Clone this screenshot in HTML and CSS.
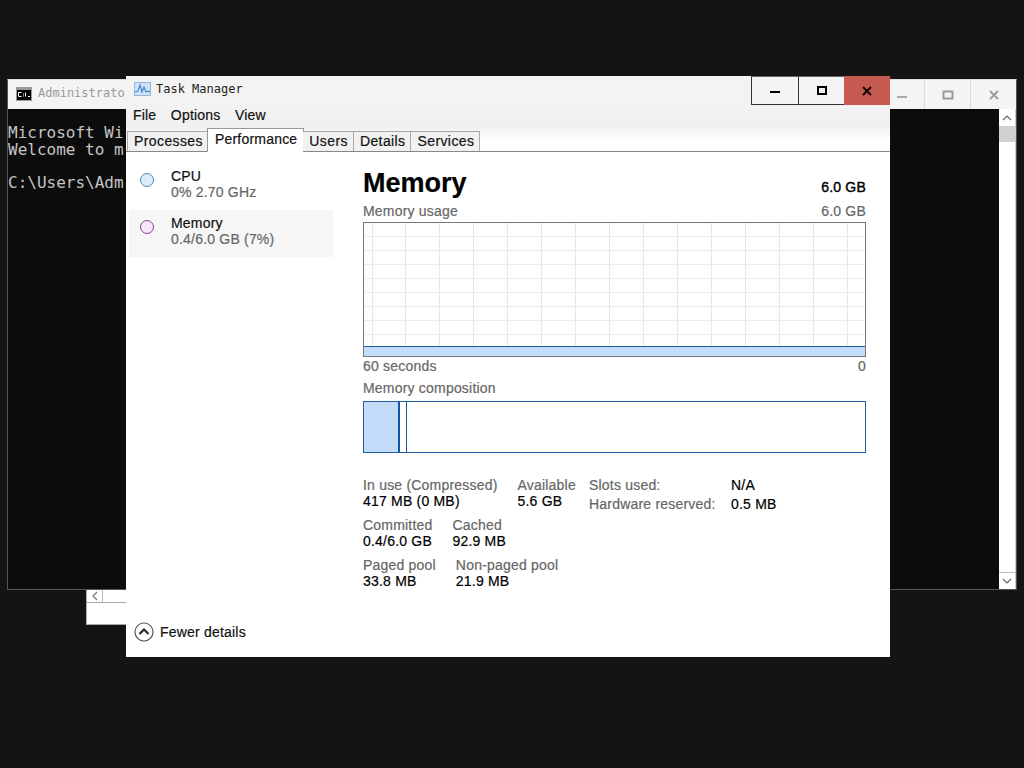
FILE: index.html
```html
<!DOCTYPE html>
<html lang="en">
<head>
<meta charset="utf-8">
<title>Task Manager</title>
<link rel="stylesheet" href="styles.css">
</head>
<body>
<div class="desktop">
  <div class="scrap">
    <div class="scrap-bar"><span class="scrap-btn"><svg width="8" height="10" viewBox="0 0 8 10"><path d="M6 1 2 5l4 4" fill="none" stroke="#777" stroke-width="1.2"/></svg></span></div>
  </div>

  <div class="cmd">
    <div class="cmd-title">
      <svg class="cmd-icon" width="16" height="14" viewBox="0 0 16 14"><rect width="16" height="14" fill="#9a9a9a"/><rect x="1" y="3" width="14" height="10" fill="#000"/><path d="M2.5 5.5h3M2.500 5.500v4M2.500 9.500h3M7 7h1M7 9h1M9.500 5.500v4M12 9.500h2" stroke="#fff" stroke-width="1" fill="none"/></svg>
      <span class="cmd-name">Administrato</span>
      <div class="cmd-controls">
        <span class="cmd-ctl"><svg width="12" height="12" viewBox="0 0 12 12"><rect x="1" y="7" width="10" height="2" fill="#aaa"/></svg></span>
        <span class="cmd-ctl"><svg width="12" height="12" viewBox="0 0 12 12"><rect x="1.500" y="2.500" width="9" height="7" fill="none" stroke="#999" stroke-width="2"/></svg></span>
        <span class="cmd-ctl"><svg width="12" height="12" viewBox="0 0 12 12"><path d="M2 2l8 8M10 2l-8 8" stroke="#999" stroke-width="1.800"/></svg></span>
      </div>
    </div>
    <div class="cmd-body">
      <pre class="console">Microsoft Wi
Welcome to m

C:\Users\Adm</pre>
      <div class="scrollbar">
        <span class="sb-btn"><svg width="10" height="8" viewBox="0 0 10 8"><path d="M1 6l4-4 4 4" fill="none" stroke="#666" stroke-width="1.200"/></svg></span>
        <span class="sb-thumb"></span>
        <span class="sb-space"></span>
        <span class="sb-btn sb-btn-end"><svg width="10" height="8" viewBox="0 0 10 8"><path d="M1 2l4 4 4-4" fill="none" stroke="#666" stroke-width="1.200"/></svg></span>
      </div>
    </div>
  </div>

  <div class="tm">
    <div class="tm-title">
      <svg class="tm-icon" width="17" height="14" viewBox="0 0 17 14"><rect x=".5" y=".5" width="16" height="13" fill="#cfe3f7" stroke="#8fb6de"/><path d="M1 10l3-1 2-6 2 7 2-5 2 5 2-1 2 1" fill="none" stroke="#4a86c5" stroke-width="1.200"/></svg>
      <span class="tm-name">Task Manager</span>
      <div class="tm-controls">
        <span class="tm-ctl tm-min"><svg width="12" height="12" viewBox="0 0 12 12"><rect x="1" y="6" width="10" height="2" fill="#000"/></svg></span>
        <span class="tm-ctl"><svg width="12" height="12" viewBox="0 0 12 12"><rect x="2" y="2" width="8" height="7" fill="none" stroke="#000" stroke-width="2"/></svg></span>
        <span class="tm-ctl tm-close"><svg width="12" height="12" viewBox="0 0 12 12"><path d="M2 2l8 8M10 2l-8 8" stroke="#1a0505" stroke-width="2"/></svg></span>
      </div>
    </div>
    <nav class="menu"><span>File</span><span>Options</span><span>View</span></nav>
    <div class="tabs">
      <span class="tab tab-first">Processes</span>
      <span class="tab tab-active">Performance</span>
      <span class="tab">Users</span>
      <span class="tab">Details</span>
      <span class="tab">Services</span>
    </div>
    <div class="content">
      <aside class="side">
        <div class="side-item">
          <span class="dot dot-cpu"></span>
          <div><div class="side-name">CPU</div><div class="side-sub">0% 2.70 GHz</div></div>
        </div>
        <div class="side-item side-item-active">
          <span class="dot dot-mem"></span>
          <div><div class="side-name">Memory</div><div class="side-sub">0.4/6.0 GB (7%)</div></div>
        </div>
      </aside>
      <main class="main">
        <div class="head">
          <h1>Memory</h1>
          <span class="head-val">6.0 GB</span>
        </div>
        <div class="cap"><span>Memory usage</span><span>6.0 GB</span></div>
        <div class="graph"><div class="graph-fill"></div></div>
        <div class="cap cap-axis"><span>60 seconds</span><span>0</span></div>
        <div class="cap cap-comp"><span>Memory composition</span></div>
        <div class="comp"><div class="comp-used"></div><div class="comp-mod"></div></div>
        <div class="stats">
          <div class="stats-left">
            <div class="stat-row">
              <div><div class="lbl">In use (Compressed)</div><div class="val">417 MB (0 MB)</div></div>
              <div><div class="lbl">Available</div><div class="val">5.6 GB</div></div>
            </div>
            <div class="stat-row">
              <div><div class="lbl">Committed</div><div class="val">0.4/6.0 GB</div></div>
              <div><div class="lbl">Cached</div><div class="val">92.9 MB</div></div>
            </div>
            <div class="stat-row">
              <div><div class="lbl">Paged pool</div><div class="val">33.8 MB</div></div>
              <div><div class="lbl">Non-paged pool</div><div class="val">21.9 MB</div></div>
            </div>
          </div>
          <div class="stats-right">
            <span class="lbl">Slots used:</span><span class="val">N/A</span>
            <span class="lbl">Hardware reserved:</span><span class="val">0.5 MB</span>
          </div>
        </div>
      </main>
    </div>
    <div class="footer">
      <svg width="20" height="20" viewBox="0 0 20 20"><circle cx="10" cy="10" r="9" fill="#fff" stroke="#555" stroke-width="1.200"/><path d="M5.500 12 10 7.500l4.500 4.500" fill="none" stroke="#222" stroke-width="2"/></svg>
      <span>Fewer details</span>
    </div>
  </div>
</div>
</body>
</html>
```
FILE: styles.css
```css
* { box-sizing: border-box; }
html, body { margin: 0; padding: 0; }
body { background: #141414; font-family: "Liberation Sans", Arial, sans-serif; font-size: 14px; letter-spacing: .2px; -webkit-text-stroke: .2px; }
.desktop { position: relative; width: 1024px; height: 768px; overflow: hidden; background: #141414; }

.scrap { position: absolute; left: 86px; top: 589px; width: 60px; height: 36px; background: #fff; border: 1px solid #aaa; }
.scrap-bar { height: 13px; border-bottom: 1px solid #aaa; }
.scrap-btn { display: flex; width: 16px; height: 12px; align-items: center; justify-content: center; border-right: 1px solid #bbb; }

.cmd { position: absolute; left: 7px; top: 79px; width: 1010px; height: 511px; background: #f2f2f2; border: 1px solid #555; border-top-color: #ddd; display: flex; flex-direction: column; }
.cmd-title { height: 29px; flex: none; display: flex; align-items: center; padding-left: 8px; background: #f4f4f4; }
.cmd-icon { margin-right: 6px; margin-bottom: 2px; }
.cmd-name { color: #999; font-family: "DejaVu Sans Mono", monospace; font-size: 12px; letter-spacing: 0; white-space: nowrap; -webkit-text-stroke: 0; margin-bottom: 4px; }
.cmd-controls { margin-left: auto; display: flex; height: 100%; }
.cmd-ctl { width: 46px; display: flex; align-items: center; justify-content: center; border-left: 1px solid #ddd; }
.cmd-body { flex: 1; display: flex; background: #0c0c0c; min-height: 0; }
.console { flex: 1; margin: 0; padding: 16px 0 0 0; color: #c4c4c4; font-family: "DejaVu Sans Mono", monospace; font-size: 16px; line-height: 16.500px; letter-spacing: 0; overflow: hidden; -webkit-text-stroke: 0; }
.scrollbar { width: 17px; flex: none; background: #fff; display: flex; flex-direction: column; border-right: 1px solid #ccc; }
.sb-btn { height: 17px; flex: none; display: flex; align-items: center; justify-content: center; }
.sb-btn-end { border-top: 1px solid #bbb; }
.sb-thumb { height: 16px; flex: none; background: #d0d0d0; }
.sb-space { flex: 1; }

.tm { position: absolute; left: 126px; top: 76px; width: 764px; height: 581px; background: #fff; display: flex; flex-direction: column; }
.tm-title { height: 30px; flex: none; display: flex; align-items: flex-start; background: #f3f3f3; }
.tm-icon { margin: 6px 5px 0 8px; }
.tm-name { margin-top: 5px; font-family: "DejaVu Sans Mono", monospace; font-size: 12px; letter-spacing: 0; color: #222; line-height: 16px; -webkit-text-stroke: 0; }
.tm-controls { margin-left: auto; display: flex; height: 29px; }
.tm-ctl { width: 46px; display: flex; align-items: center; justify-content: center; border: 1px solid #333; border-top: 1px solid #666; border-right: none; background: #f4f4f4; }
.tm-min { width: 47px; }
.tm-close { width: 46px; background: #c75a50; border: none; }
.menu { height: 20px; flex: none; display: flex; gap: 14.500px; padding: 0 0 2px 7px; align-items: center; background: linear-gradient(#f3f3f3, #efefef); color: #111; }
.tabs { height: 26px; flex: none; display: flex; align-items: flex-end; padding-left: 1px; background: linear-gradient(#f0f0f0 0, #fff 60%); border-bottom: 1px solid #888; }
.tab { height: 20px; padding: 0 5px 2px 6px; display: flex; align-items: center; border: 1px solid #aaa; border-left: none; border-bottom: none; background: #f1f1f1; color: #111; letter-spacing: .4px; }
.tab-first { border-left: 1px solid #aaa; }
.tab-active { height: 24px; margin: 0 -1px -1px -2px; padding: 0 6px 3px 7px; background: #fff; border: 1px solid #999; border-bottom: none; letter-spacing: .2px; }

.content { flex: 1; display: flex; min-height: 0; }
.side { width: 237px; flex: none; padding-top: 8px; }
.side-item { height: 48px; margin-left: 3px; width: 204px; display: flex; align-items: center; gap: 17px; padding-left: 11px; }
.side-item-active { background: #f6f6f6; height: 47px; margin-top: 2px; padding-bottom: 5px; }
.dot { width: 14px; height: 14px; border-radius: 50%; flex: none; margin-top: -8px; }
.dot-cpu { background: #d9ecf8; border: 1.500px solid #4a8bb0; }
.dot-mem { background: #f5e6f8; border: 1.500px solid #8a3f96; }
.side-name { color: #111; line-height: 16px; }
.side-sub { color: #666; line-height: 16px; }

.main { width: 503px; flex: none; padding-top: 15px; }
.head { display: flex; justify-content: space-between; align-items: flex-end; height: 32px; }
h1 { margin: 0; font-size: 27px; line-height: 32px; font-weight: bold; color: #000; letter-spacing: 0; }
.head-val { color: #000; line-height: 20px; margin-bottom: 2px; -webkit-text-stroke: .4px; }
.cap { display: flex; justify-content: space-between; color: #666; line-height: 16px; margin-top: 4px; height: 19px; }
.graph { height: 135px; border: 1px solid #777; position: relative; background-color: #fff;
  background-image: repeating-linear-gradient(to right, transparent 0, transparent 33px, #e6e6e6 33px, #e6e6e6 34px), repeating-linear-gradient(to bottom, transparent 0, transparent 13px, #ebebeb 13px, #ebebeb 14px), linear-gradient(to right, transparent 8px, #e6e6e6 8px, #e6e6e6 9px, transparent 9px);
  background-position: 8px 0, 0 0, 0 0; }
.graph-fill { position: absolute; left: 0; right: 0; bottom: 0; height: 10px; background: #c2defc; border-top: 1px solid #1f5f9e; }
.cap-axis { margin-top: 1px; height: 22px; }
.cap-comp { margin-top: 0; height: 20px; }
.comp { height: 52px; margin-top: 1px; border: 1px solid #1f5f9e; display: flex; }
.comp-used { width: 36px; background: #c4dcf9; border-right: 2px solid #1358a8; }
.comp-mod { width: 7px; border-right: 1px solid #1358a8; }

.stats { display: flex; margin-top: 24px; }
.stats-left { width: 226px; flex: none; display: flex; flex-direction: column; gap: 8px; }
.stat-row { display: flex; gap: 20px; white-space: nowrap; }
.lbl { display: block; color: #666; line-height: 16px; }
.val { display: block; color: #000; line-height: 16px; }
.stats-right { display: grid; grid-template-columns: 142px auto; row-gap: 3px; align-content: start; white-space: nowrap; }

.footer { position: absolute; left: 8px; bottom: 15px; display: flex; align-items: center; gap: 6px; color: #111; }
.footer span { line-height: 20px; }
```
